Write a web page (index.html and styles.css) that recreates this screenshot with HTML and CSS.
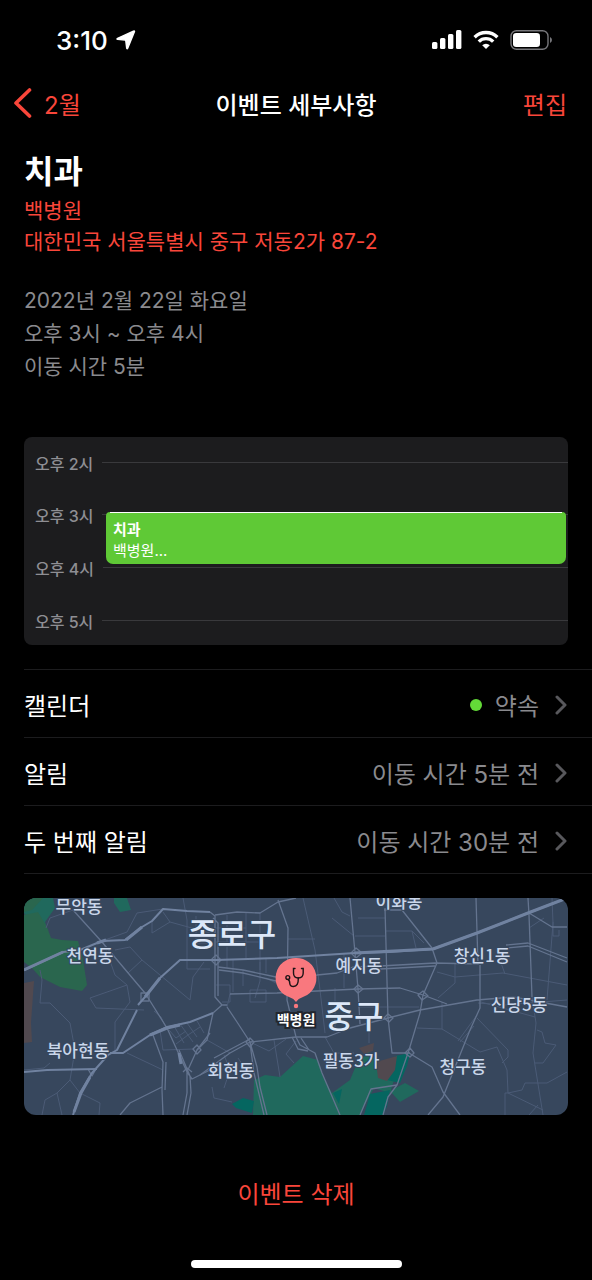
FILE: index.html
```html
<!DOCTYPE html>
<html lang="ko">

<head>
    <meta charset="UTF-8">
    <meta name="viewport" content="width=device-width, initial-scale=1.0">
    <title>이벤트 세부사항</title>
    <link rel="stylesheet" href="styles.css">
</head>

<body>
    <div class="status-bar">
        <div class="status-time">
            <span>3:10</span>
            <svg width="20" height="20" viewBox="0 0 20 20">
                <path d="M18.400 1.800 11.700 18.200Q11.200 19.200 10.700 18.200L9.800 11Q9.700 10.200 9 10.100L1.600 9.300Q.4 9 1.600 8.300L17.400 1.200Q19 .6 18.400 1.800Z" fill="#fff" stroke="#fff" stroke-width="1.400" stroke-linejoin="round" />
            </svg>
        </div>
        <div class="status-icons">
            <svg width="30" height="20" viewBox="0 0 30 20" fill="#fff">
                <rect x="0" y="12" width="5.400" height="7" rx="1.500" />
                <rect x="8" y="8" width="5.400" height="11" rx="1.500" />
                <rect x="16" y="4" width="5.400" height="15" rx="1.500" />
                <rect x="24" y="0" width="5.400" height="19" rx="1.500" />
            </svg>
            <svg width="26" height="20" viewBox="0 0 26 20" fill="none" stroke="#fff" stroke-width="3.400">
                <path d="M1.600 7.200A16.300 16.300 0 0 1 24.400 7.200" />
                <path d="M5.800 11.600A10.300 10.300 0 0 1 20.200 11.600" />
                <path d="M13 19 9.200 15.200A5.400 5.400 0 0 1 16.800 15.200Z" fill="#fff" stroke="none" />
            </svg>
            <svg width="42" height="20" viewBox="0 0 42 20">
                <rect x="1" y=".7" width="37" height="18.600" rx="5.500" fill="none" stroke="#77777b" stroke-width="1.400" />
                <rect x="3" y="3" width="27" height="14" rx="3.200" fill="#fff" />
                <path d="M40 7Q42 8 42 10T40 13Z" fill="#77777b" />
            </svg>
        </div>
    </div>

    <header class="nav">
        <a class="nav-back" href="#">
            <svg width="19" height="30" viewBox="0 0 19 30">
                <path d="M16.500 2 3 15 16.500 28" fill="none" stroke="currentColor" stroke-width="3.600" stroke-linecap="round" stroke-linejoin="round" />
            </svg>
            <span>2월</span>
        </a>
        <h1>이벤트 세부사항</h1>
        <button class="nav-edit" type="button">편집</button>
    </header>

    <main>
        <section class="summary">
            <h2>치과</h2>
            <a class="place" href="#map">백병원<br>대한민국 서울특별시 중구 저동2가 87-2</a>
            <p>2022년 2월 22일 화요일</p>
            <p>오후 3시 ~ 오후 4시</p>
            <p>이동 시간 5분</p>
        </section>

        <section class="timeline">
            <ol>
                <li>오후 2시</li>
                <li>오후 3시</li>
                <li>오후 4시</li>
                <li>오후 5시</li>
            </ol>
            <div class="event">
                <strong>치과</strong>
                <span>백병원...</span>
            </div>
        </section>

        <ul class="rows">
            <li>
                <button type="button">
                    <span class="row-name">캘린더</span>
                    <span class="dot"></span>
                    <span class="row-value">약속</span>
                    <svg width="12" height="20" viewBox="0 0 12 20"><path d="M2 2 10 10 2 18" /></svg>
                </button>
            </li>
            <li>
                <button type="button">
                    <span class="row-name">알림</span>
                    <span class="row-value">이동 시간 5분 전</span>
                    <svg width="12" height="20" viewBox="0 0 12 20"><path d="M2 2 10 10 2 18" /></svg>
                </button>
            </li>
            <li>
                <button type="button">
                    <span class="row-name">두 번째 알림</span>
                    <span class="row-value">이동 시간 30분 전</span>
                    <svg width="12" height="20" viewBox="0 0 12 20"><path d="M2 2 10 10 2 18" /></svg>
                </button>
            </li>
        </ul>

        <div class="map" id="map">
            <svg viewBox="0 0 544 217">
                <!-- 공원 -->
                <g class="park">
                    <path class="teal" d="M0 0H29L31 10 21 24 26 40 14 32 0 15Z" />
                    <path class="wood" d="M0 0H19L8 12 0 14ZM0 17 14 14 23 29 27 40 38 42 54 43 59 62 63 87 58 93 36 89 16 79 8 70 0 64Z" />
                    <path class="teal" d="M90 0H103L107 12 96 14 90 5Z" />
                    <path class="brown" d="M0 85 10 83 7 125 8 144 0 145Z" />
                    <path class="teal" d="M229 217 230 182 241 177 256 179 279 158 294 162 299 179 308 195 326 182 331 170 344 153 352 162 360 180 370 182 366 195 350 190 342 205 336 217ZM366 193 381 185 395 193 376 204Z" />
                    <path class="deep" d="M208 206 219 200 230 203 228 215 212 210ZM309 195 318 191 315 206ZM371 158 386 155 383 168 376 185 363 182ZM346 196 366 192 363 208 359 217H340Z" />
                    <path class="brown" d="M335 150 350 145 349 153 340 156ZM352 164 373 158 371 172 363 183 354 180Z" />
                </g>
                <!-- 도로 -->
                <g class="street">
                    <path d="M16 72 18 82 16 105H26L46 125 51 152 46 182 56 195 76 205 75 217M18 217 21 202 33 195 46 182M33 195 38 217" />
                    <path d="M120 112 72 110 66 100 103 87 106 104 91 124V152M80 46 91 77 103 87M91 52 106 49 118 62 104 75M118 62 166 102 169 79 180 64M103 155 139 172M0 172 20 170 26 165" />
                    <path d="M22 30 26 20 49 12M78 43 103 34 113 15 139 11M128 23V35L146 24 186 35M159 0 163 22V71H186M146 24 139 14M172 18V45H186" />
                    <path d="M130 113 137 119 141 128M136 132 139 152 170 151M145 132 152 140 162 133M150 128 160 145M156 126 169 144M163 125 173 139M152 146 164 137 176 129M173 123 180 135" />
                    <path d="M203 17V70M209 62V94M222 15V61M236 15V72M192 30H222M192 44H236M192 87H206V104H198M206 96 203 109M236 64V83L231 100M226 92H242V104H226ZM219 72V88M242 60V75" />
                    <path d="M279 0 291 52 296 92 301 135M264 41H291M266 62V95M242 80 252 85M226 144 245 153 262 141M183 142 206 155M200 157 206 172 200 190M188 189 190 200 208 204M214 160 222 172M250 142 256 179M272 143 262 156 270 165M301 139 310 155 330 155" />
                    <path d="M308 20 330 38M310 0 318 14 326 18M334 20H361M331 38H361M361 33H388L392 50M388 33 400 45M361 109H395M334 109H361M345 126V145M311 90V130M320 56V90" />
                    <path d="M413 74 431 79 479 75 543 87M431 66V85L414 100M418 104V131L393 130M418 131 456 154 473 149 483 172 484 195 498 192 501 185H523L543 174M453 120 484 152V159L478 165M453 117 434 143M450 128 436 144" />
                    <path d="M528 0 529 25 523 102M529 24V38H535V32M508 99 512 125 509 155 519 217M513 132 518 134 521 145 532 147 519 165H511M457 104 511 119M481 217V195H484L519 212M477 65 481 76M505 30 520 20M454 105 480 107 543 102M505 217 514 207" />
                </g>
                <g class="road">
                    <path d="M49 12 78 44 121 95 143 130 153 152 163 174V195L159 217M129 137 139 164 138 192 139 217M142 164 141 192M138 189 106 205 96 217M186 135 173 152 163 174 168 181 186 172M155 152 166 178 167 195 163 217" />
                    <path d="M186 14 191 18V99L198 107 189 115 183 142 173 152M189 20 194 25V98M203 109 213 124 226 144 233 169 236 189 243 217M226 145 230 175 240 217M198 107H203" />
                    <path d="M191 17 213 14 236 15 254 4 272 0M194 69 219 72 252 79 293 77 313 75 329 69 356 68 411 65 454 66M195 72 219 75 252 83M356 71 411 68M206 96 253 95 293 93 334 91 376 90 399 97 423 106" />
                    <path d="M254 2 264 30 263 102 272 139 276 147 291 155 298 175 316 217M268 139 274 151 284 153M277 140 285 152M326 0 331 55 334 91 336 126M361 10 364 120 368 155H386M360 12H378L408 50 413 65 399 97 396 115 385 152 373 187 364 199 359 217" />
                    <path d="M176 177 206 155 226 144 272 139 303 139 326 130 364 120 396 112 453 102 489 99 543 109M226 141 190 160M385 155 408 169 419 194 436 217M456 67V110L446 132 419 199 404 217M452 0 454 67M504 0 505 17 508 99" />
                    <path d="M505 15 528 29H543M482 47 504 45 543 60M482 50 504 48 543 64M373 187 347 191 336 217" />
                    <path d="M117 95H125V103H117ZM327 55 332 50 338 55 332 60ZM330 91 334 87 339 91 334 95ZM394 97 399 93 404 98 398 102ZM360 120 364 116 369 120 365 124ZM187 62 192 57 197 62 192 67ZM222 144 226 140 230 144 226 149ZM381 155 386 150 390 155 386 159ZM159 174 163 170 168 174M169 151 173 147 177 152 173 156ZM64 171 68 178 72 171" />
                </g>
                <g class="road wide">
                    <path d="M0 72 39 54 56 52 78 43 101 42 118 29 128 23 139 11 163 13 186 14M49 217 56 195 68 175 84 157 93 152 113 112M114 107 121 99 136 80 156 62H192L253 60 331 55 366 54 409 51 453 35 504 15 543 0" />
                    <path d="M0 174 23 172 73 171M86 155H99L126 137 143 129 166 124 189 115" />
                </g>
                <path class="trunk" d="M0 72 39 54M73 45 82 42M102 42 118 29M50 214 57 195 66 179M121 99 136 80M126 137 143 130 156 127M155 155 157 166M409 51 453 35 504 15 543 0M331 55 409 51" />

                <g class="label">
                    <text x="55" y="15">무악동</text>
                    <text x="66" y="64">천연동</text>
                    <text x="375" y="10">이화동</text>
                    <text x="335" y="74">예지동</text>
                    <text x="458" y="64">창신1동</text>
                    <text x="495" y="113">신당5동</text>
                    <text x="54" y="159">북아현동</text>
                    <text x="207" y="179">회현동</text>
                    <text x="327" y="169">필동3가</text>
                    <text x="439" y="175">청구동</text>
                </g>
                <g class="label district">
                    <text x="208" y="48">종로구</text>
                    <text x="330" y="130">중구</text>
                </g>

                <!-- 병원 핀 -->
                <path d="M272 60A20 20 0 0 1 280 98.500Q275 100 272 104 269 100 264 98.500A20 20 0 0 1 272 60Z" fill="#f9787e" />
                <circle cx="272" cy="108" r="2.200" fill="#f9787e" />
                <g fill="none" stroke="#1d1416" stroke-width="1.400" stroke-linecap="round">
                    <path d="M271 70.500H269.500V75Q269.500 80 274.300 80T279.200 75V70.500H277.500" />
                    <path d="M274.300 80Q274.500 88.500 269.500 88.500 266 88.500 265.800 85.500 265.700 82 263.800 81.500" />
                    <circle cx="263.800" cy="79.500" r="1.900" />
                </g>
                <text class="pin-name" x="272" y="127">백병원</text>
            </svg>
        </div>
    </main>

    <footer>
        <button class="delete" type="button">이벤트 삭제</button>
        <div class="home-bar"></div>
    </footer>
</body>

</html>
```

FILE: styles.css
```css
* {
    box-sizing: border-box;
}

body {
    font-family: Inter, "Noto Sans CJK KR", sans-serif;
    margin: 0;
    background-color: #000;
    color: #fff;
    font-size: 24px;
}

h1,
h2,
p,
ol,
ul {
    margin: 0;
    padding: 0;
    list-style: none;
}

button {
    font: inherit;
    color: inherit;
    background: none;
    border: none;
    padding: 0;
    cursor: pointer;
}

a {
    text-decoration: none;
}

svg {
    display: block;
}

.status-bar {
    display: flex;
    justify-content: space-between;
    align-items: center;
    height: 80px;
    padding: 0 40px 0 56px;
}

.status-time,
.status-icons {
    display: flex;
    align-items: center;
}

.status-time {
    gap: 8px;
    font-size: 26px;
    font-weight: 500;
}

.status-icons {
    gap: 11px;
}

.nav {
    display: grid;
    grid-template-columns: 1fr auto 1fr;
    align-items: center;
    height: 46px;
    padding: 0 13px;
}

.nav h1 {
    font-size: 24px;
    font-weight: 500;
}

.nav-back {
    display: flex;
    align-items: center;
    gap: 12px;
}

.nav-back,
.nav-edit,
.place,
.delete {
    color: #f9463a;
}

.nav-edit {
    justify-self: end;
    margin-right: 12px;
}

.summary {
    padding: 23px 24px 0;
    font-size: 21px;
}

.summary h2 {
    font-size: 32px;
    line-height: 46px;
}

.place {
    display: block;
    line-height: 31px;
    margin-bottom: 27px;
}

.summary p {
    color: #8a8a8e;
    line-height: 33px;
}

.timeline {
    position: relative;
    margin: 54px 24px 24px;
    background-color: #1c1c1e;
    border-radius: 8px;
    overflow: hidden;
}

.timeline li {
    display: flex;
    align-items: center;
    gap: 9px;
    height: 53px;
    padding-left: 11px;
    color: #8e8e93;
    font-size: 16px;
    font-weight: 500;
}

.timeline li:first-child,
.timeline li:last-child {
    height: 51px;
}

.timeline li:last-child {
    padding-top: 2px;
}

.timeline li::after {
    content: "";
    flex: 1;
    height: 1px;
    background-color: #39393c;
}

/* 시간표 위에 놓이는 이벤트 */
.event {
    position: absolute;
    top: 75px;
    left: 82px;
    right: 2px;
    height: 52px;
    padding: 7px 7px 0;
    background-color: #5fc936;
    border-radius: 4px 4px 7px 7px;
    font-size: 15px;
    line-height: 21px;
}

.event::before {
    content: "";
    position: absolute;
    top: 0;
    left: 4px;
    right: 4px;
    height: 1px;
    background-color: #fff;
}

.event strong,
.event span {
    display: block;
}

.rows {
    margin-left: 24px;
    border-top: 1px solid #1c1c1e;
}

.rows li {
    border-bottom: 1px solid #1c1c1e;
}

.rows button {
    display: flex;
    align-items: center;
    width: 100%;
    height: 67px;
    padding: 2px 25px 0 0;
    text-align: left;
}

.row-name {
    flex: 1;
}

.row-value {
    color: #8a8a8e;
    margin-right: 16px;
}

.dot {
    width: 12px;
    height: 12px;
    margin-right: 13px;
    border-radius: 50%;
    background-color: #63da38;
}

.rows path {
    fill: none;
    stroke: #58585c;
    stroke-width: 3;
    stroke-linecap: round;
    stroke-linejoin: round;
}

.map {
    margin: 24px 24px 0;
    border-radius: 12px;
    background-color: #37475d;
    overflow: hidden;
}

.map svg {
    width: 100%;
}

.teal {
    fill: #20695d;
}

.wood {
    fill: #2a664e;
}

.deep {
    fill: #056660;
}

.brown {
    fill: #51494f;
}

.street,
.road,
.trunk {
    fill: none;
    stroke: #4b5b76;
    stroke-width: 1;
    stroke-linejoin: round;
}

.road {
    stroke: #64748f;
    stroke-width: 1.3;
}

.wide {
    stroke: #7082a0;
    stroke-width: 2;
}

.trunk {
    stroke: #7082a0;
    stroke-width: 3;
}

.label {
    fill: #c9d6ea;
    stroke: #37475d;
    stroke-width: 2px;
    paint-order: stroke;
    font-family: "Noto Sans CJK KR", sans-serif;
    font-size: 17px;
    font-weight: 500;
    text-anchor: middle;
}

.district {
    fill: #dce7f8;
    font-size: 32px;
}

.pin-name {
    fill: #fff;
    stroke: #22262e;
    stroke-width: 4px;
    paint-order: stroke;
    font-size: 14px;
    font-weight: 700;
    text-anchor: middle;
}

footer {
    display: flex;
    flex-direction: column;
    align-items: center;
    padding: 60px 24px 12px;
}

.delete {
    line-height: 40px;
}

.home-bar {
    width: 211px;
    height: 8px;
    margin-top: 45px;
    border-radius: 4px;
    background-color: #fff;
}
```
